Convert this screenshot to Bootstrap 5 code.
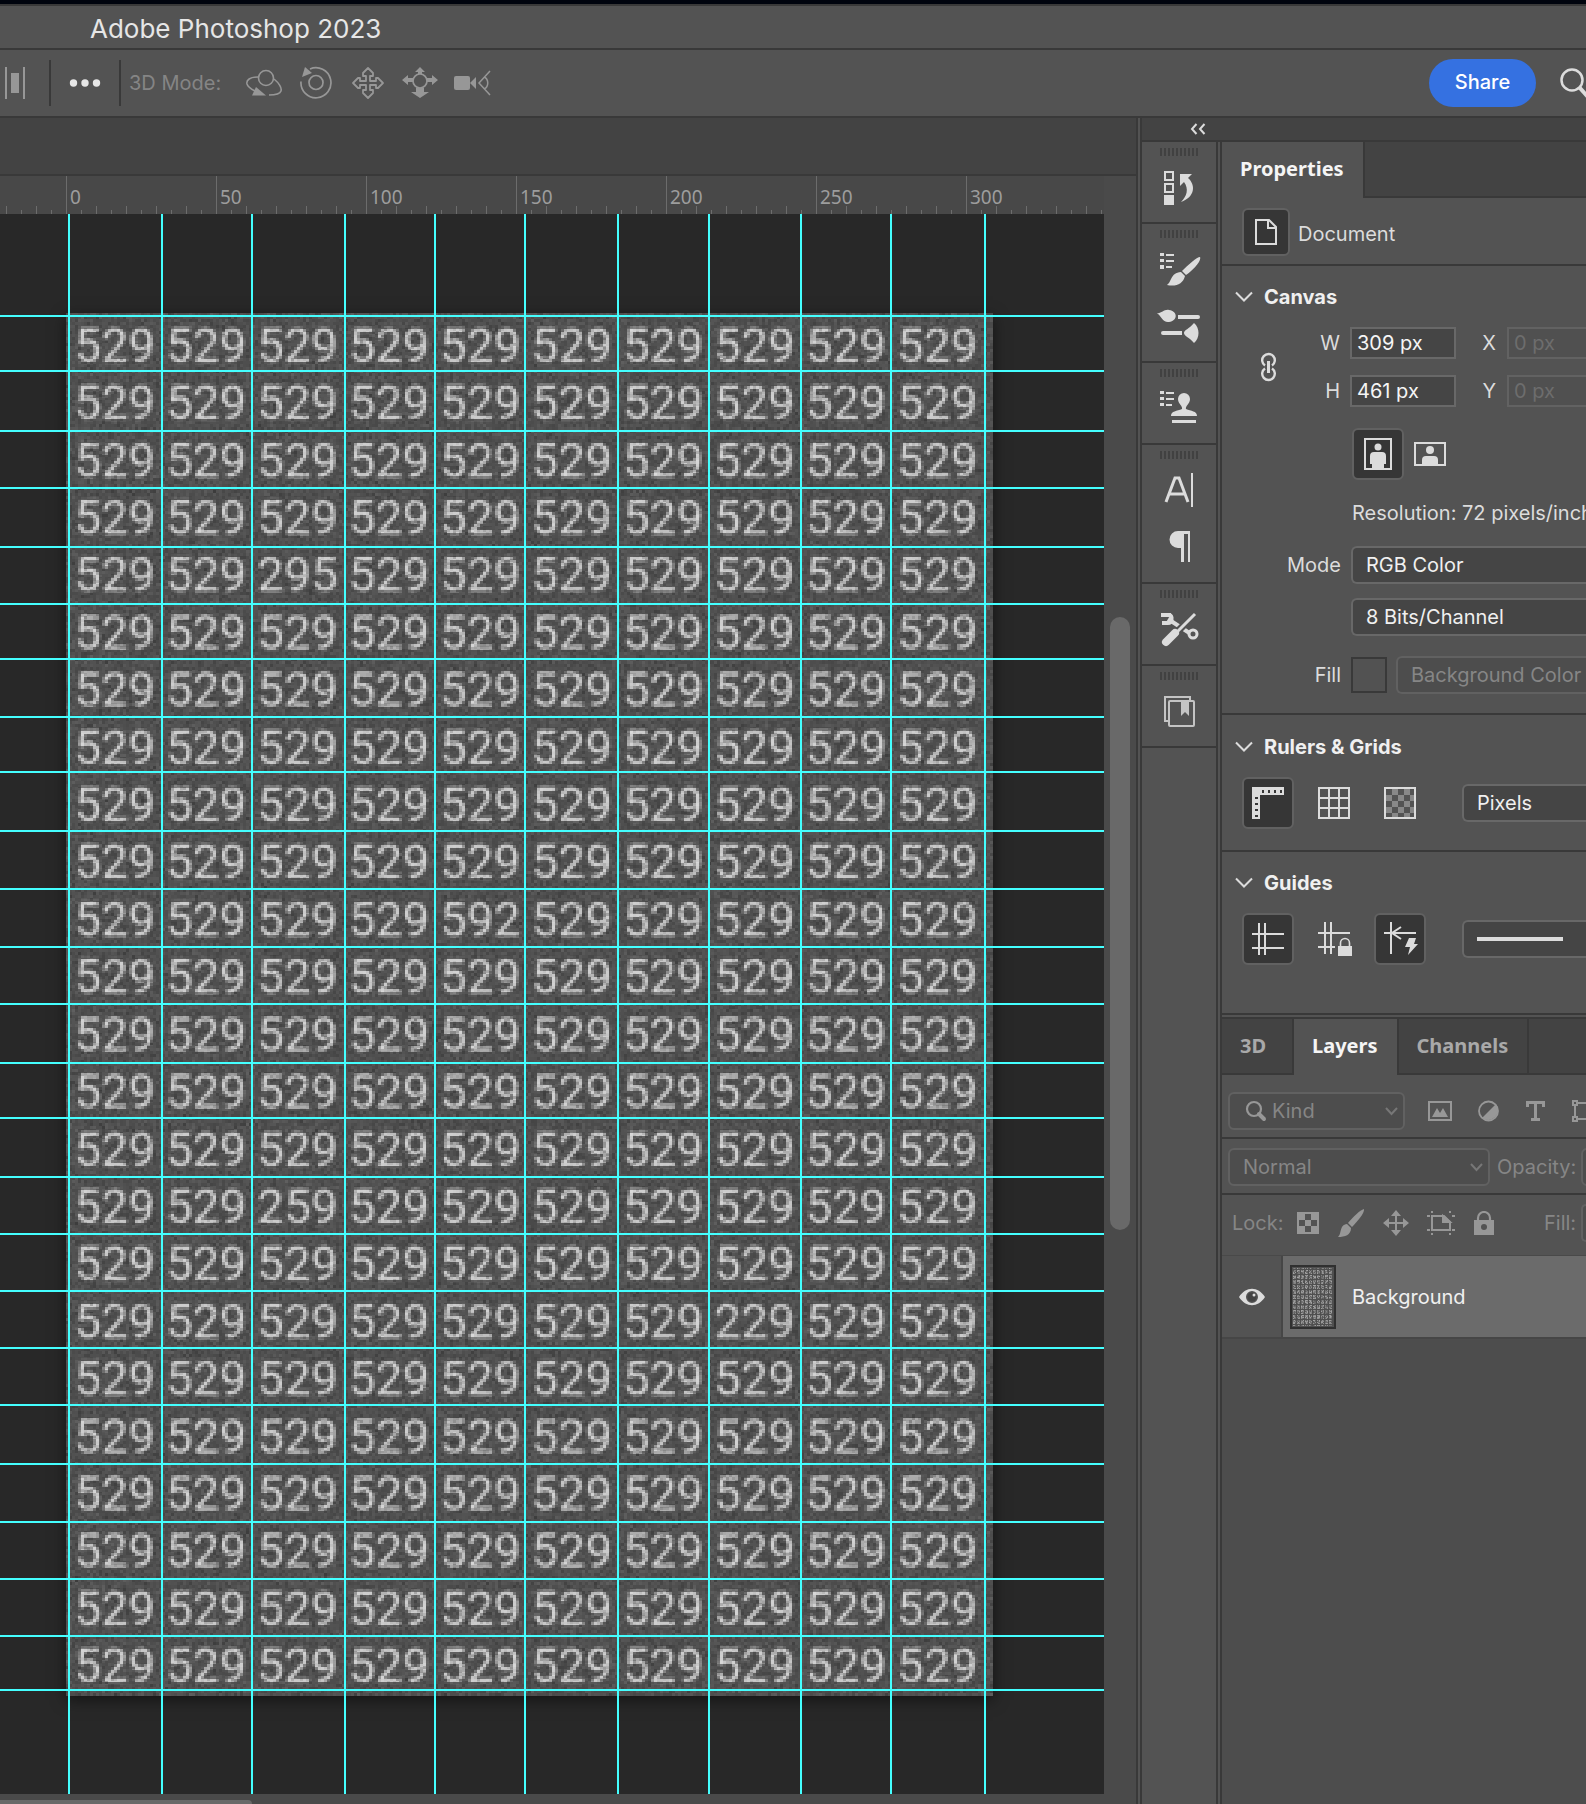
<!DOCTYPE html>
<html lang="en">
<head>
<meta charset="utf-8">
<meta name="viewport" content="width=device-width, initial-scale=1">
<title>Adobe Photoshop 2023</title>
<link href="https://cdn.jsdelivr.net/npm/bootstrap@5.3.0/dist/css/bootstrap.min.css" rel="stylesheet">
<style>
  :root { --face: #535353; --well: #434343; --line: #393939; --edge: #686868; --ink: #dcdcdc; --dim: #979797; }
  body { background: var(--face); color: var(--ink); font: 400 20px/24px Inter, "Noto Sans", sans-serif; }
  svg { display: block; flex: none; }
  .app-shell { height: 100vh; min-height: 1400px; overflow: hidden; }
  .desk-strip { height: 6px; background: #00040e; border-bottom: 2px solid var(--line); }
  .title-strip { height: 44px; padding: 3px 0 0 90px; border-bottom: 2px solid var(--line); font-size: 26px; color: #e6e6e6; }
  .options-bar { height: 68px; border-bottom: 2px solid var(--line); color: var(--dim); }
  .rule-v { width: 2px; height: 46px; background: var(--line); }
  .after-align { margin: 0 18px 0 23px; }
  .after-more { margin: 0 8px 0 18px; }
  .mode-label { color: #858585; }
  .mode-tools { gap: 16px; margin-left: 25px; }
  .plain-btn { background: none; border: 0; padding: 0; color: inherit; }
  .share-btn { --bs-btn-bg: #3571e1; --bs-btn-hover-bg: #2c64cf; --bs-btn-border-color: transparent; --bs-btn-color: #fff; width: 107px; height: 48px; font-size: 20px; font-weight: 500; padding: 0 0 2px; }

  .doc-side { background: #4a4a4a; border-right: 2px solid var(--line); min-width: 0; }
  .doc-tabs { height: 58px; background: var(--well); border-bottom: 2px solid var(--line); }
  .ruler { height: 38px; background-color: #484848; overflow: hidden; font: 19px/24px "Noto Sans", sans-serif; color: #9d9d9d;
    background-image: linear-gradient(90deg, #6c6c6c 1px, transparent 1px), linear-gradient(90deg, #6c6c6c 1px, transparent 1px), linear-gradient(90deg, #6c6c6c 1px, transparent 1px);
    background-size: 150px 38px, 30px 8px, 15px 4px; background-position: 66px 0, 6px 100%, 6px 100%; background-repeat: repeat-x; padding-left: 66px; }
  .ruler span { width: 150px; flex: none; padding: 9px 0 0 4px; }
  .stage { background: #282828; position: relative; overflow: hidden; padding: 99px 0 0 66px; }
  .art { width: 927px; height: 1383px; padding: 4px 10px 1px 3px; background: #505050; position: relative; box-shadow: 0 4px 14px rgba(0,0,0,.5); }
  .num-grid { height: 100%; display: grid; grid-template: repeat(24, 1fr) / repeat(10, 1fr); place-items: center; font: 400 48px/56px Roboto, sans-serif; color: #d8d8d8; filter: url(#mosaic); }
  .grain { position: absolute; inset: 0; width: 100%; height: 100%; image-rendering: pixelated; }
  .guide-v, .guide-h { position: absolute; background: #44ffff; }
  .guide-v { top: 0; bottom: 0; width: 2px; }
  .guide-h { left: 0; right: 0; height: 2px; }
  .scroll-v { width: 32px; padding: 403px 6px 0; margin-top: 38px; }
  .scroll-v div { height: 613px; border-radius: 10px; background: #696969; }
  .scroll-h { height: 10px; padding-top: 6px; }
  .scroll-h div { height: 4px; width: 252px; border-radius: 0 8px 0 0; background: #696969; }

  .dock { width: 446px; border-left: 2px solid var(--line); margin-left: 2px; flex: none; }
  .dock-head { height: 24px; background: var(--well); border-bottom: 2px solid var(--line); padding-left: 48px; }
  .icon-rail { width: 76px; border-right: 2px solid var(--line); flex: none; }
  .rail-group { border-bottom: 2px solid var(--line); padding: 6px 0 15px; display: flex; flex-direction: column; align-items: center; }
  .grip { width: 38px; height: 8px; margin-bottom: 12px; background: repeating-linear-gradient(90deg, #414141 0 2px, transparent 2px 4px); }
  .rail-group button { margin-bottom: 1px; }
  .rail-group button + button { margin-top: 18px; }
  .panels { border-left: 2px solid var(--line); margin-left: 2px; min-width: 0; background: var(--face); }

  .tab-strip { height: 56px; background: var(--well); flex-wrap: nowrap; }
  .tab-strip .nav-link { border: 0; border-radius: 0; border-right: 2px solid var(--line); border-bottom: 2px solid var(--line); padding: 0 19px 0 18px; min-width: 72px; height: 56px; font: 700 20px/52px "Noto Sans", sans-serif; color: #a9a9a9; text-align: left; margin: 0; }
  .tab-strip .nav-link.active { background: var(--face); color: #f5f5f5; border-color: var(--line); border-bottom: 0; padding-bottom: 2px; }
  .tab-rest { flex: 1; border-bottom: 2px solid var(--line); }
  .tool-btn { width: 52px; height: 52px; border: 2px solid transparent; border-radius: 6px; background: none; color: var(--ink); display: grid; place-items: center; padding: 0; flex: none; }
  .tool-btn.on { background: #363636; border-color: #616161; }
  .tool-btn.doc { width: 48px; height: 48px; }
  .sect { border-bottom: 2px solid var(--line); }
  .sect-head { height: 24px; gap: 11px; padding-left: 13px; font-weight: 700; font-size: 20px; line-height: 24px; color: #f0f0f0; margin: 0; }
  .field-label { width: 119px; text-align: right; margin-right: 10px; flex: none; }
  .short-label { width: 63px; }
  .xy-label { width: 40px; text-align: right; margin-right: 11px; }
  .num-box { width: 106px; height: 32px; border: 2px solid var(--edge); border-radius: 0; background: #454545; color: #f5f5f5; padding: 0 5px; font: inherit; flex: none; }
  .num-box:disabled { background: #505050; border-color: #626262; color: #6d6d6d; }
  .pick { height: 38px; border: 2px solid var(--edge); border-radius: 6px; background: #454545; color: #f0f0f0; padding: 0 13px; font: inherit; box-shadow: none; }
  .pick:disabled { background: #4d4d4d; border-color: #616161; color: #868686; opacity: 1; }
  .to-edge { border-right: 0; border-top-right-radius: 0; border-bottom-right-radius: 0; padding-right: 0; }
  .after-tools { margin-left: 22px; }
  .swatch { width: 36px; height: 36px; border: 2px solid var(--line); background: #525252; margin-right: 9px; flex: none; padding: 0; }
  .dimmed { color: #868686; }
  .layers { color: var(--dim); margin-top: 2px; border-top: 2px solid var(--line); }
  .layer-list { background: #4d4d4d; }
  .layer-row { height: 84px; border-top: 1px solid #494949; border-bottom: 2px solid #464646; background: #6b6b6b; color: #f0f0f0; }
  .eye-cell { width: 61px; border-right: 2px solid #464646; background: var(--face); }
  .kind-box { position: relative; width: 177px; flex: none; }
  .kind-box .pick { padding-left: 42px; }
  .over-l { position: absolute; left: 17px; top: 8px; }
  .over-r { position: absolute; right: 7px; top: 15px; }
</style>
</head>
<body>
<svg width="0" height="0" class="position-absolute" aria-hidden="true">
  <filter id="mosaic" x="0" y="0" width="100%" height="100%" color-interpolation-filters="sRGB">
    <feGaussianBlur in="SourceGraphic" stdDeviation="0.8" result="soft"/>
    <feFlood x="1" y="1" width="1" height="1" flood-color="#000"/>
    <feComposite width="3" height="3" x="0" y="0"/>
    <feTile result="dots"/>
    <feComposite in="soft" in2="dots" operator="in"/>
    <feMorphology operator="dilate" radius="1"/>
  </filter>
</svg>

<div class="app-shell d-flex flex-column">
  <div class="desk-strip flex-shrink-0"></div>
  <header class="title-strip d-flex align-items-center flex-shrink-0">Adobe Photoshop 2023</header>

  <div class="options-bar d-flex align-items-center flex-shrink-0">
    <button class="plain-btn ms-1" aria-label="Distribute"><svg width="22" height="34" viewBox="0 0 22 34"><path fill="currentColor" d="M1 1h2v32H1zM19 1h2v32h-2zM7 7h8v20H7z"/></svg></button>
    <div class="rule-v after-align"></div>
    <button class="plain-btn" aria-label="More options"><svg width="32" height="10" viewBox="0 0 32 10" fill="#e6e6e6"><circle cx="4.500" cy="5" r="3.700"/><circle cx="16" cy="5" r="3.700"/><circle cx="27.500" cy="5" r="3.700"/></svg></button>
    <div class="rule-v after-more"></div>
    <span class="mode-label">3D Mode:</span>
    <div class="mode-tools d-flex">
      <button class="plain-btn" aria-label="Orbit"><svg width="36" height="34" viewBox="0 0 36 34" fill="none" stroke="currentColor" stroke-width="1.600"><circle cx="20" cy="12" r="7.500"/><path d="M12 11C4 11 0 14 1 18c1 3 4 5 8 7M28 13c5 4 8 9 7 12-1 3-6 4-12 4"/><path fill="currentColor" stroke="none" d="M10 21l10 8.500H6z"/></svg></button>
      <button class="plain-btn" aria-label="Roll"><svg width="36" height="34" viewBox="0 0 36 34" fill="none" stroke="currentColor" stroke-width="1.700"><circle cx="18" cy="16.500" r="7"/><path d="M3 15.500A15 15 0 1 0 12 3"/><path fill="currentColor" stroke="none" d="M7 1l7 6-10 4z"/></svg></button>
      <button class="plain-btn" aria-label="Pan"><svg width="36" height="34" viewBox="0 0 36 34" fill="none" stroke="currentColor" stroke-width="1.800" stroke-linejoin="round"><path d="M18 2l5 5v3h-3v5h6v-3h2l5 5-5 5h-2v-3h-6v5h3v3l-5 5-5-5v-3h3v-5h-6v3H8l-5-5 5-5h2v3h6v-5h-3V7z"/></svg></button>
      <button class="plain-btn" aria-label="Slide"><svg width="36" height="34" viewBox="0 0 36 34"><circle cx="18" cy="15" r="7" fill="none" stroke="currentColor" stroke-width="1.700"/><path fill="currentColor" d="M18 1l5 5h-3v2h-4V6h-3zM0 14l6-5v3h5v4H6v3zM36 14l-6-5v3h-5v4h5v3zM14 22h8v4h5l-9 6-9-6h5z"/></svg></button>
      <button class="plain-btn" aria-label="Zoom camera"><svg width="38" height="34" viewBox="0 0 38 34"><rect x="0" y="10" width="16" height="14" rx="2" fill="currentColor"/><path fill="currentColor" d="M16 17l6-6v12z"/><path d="M36 5L25 17l11 12M30 11c5 2 5 10 0 12" fill="none" stroke="currentColor" stroke-width="1.500"/></svg></button>
    </div>
    <button class="btn share-btn rounded-pill ms-auto">Share</button>
    <button class="plain-btn ms-4 overflow-hidden" aria-label="Search"><svg width="26" height="32" viewBox="0 0 26 32" fill="none" stroke="#dcdcdc"><circle cx="12" cy="13" r="10.500" stroke-width="2.500"/><path d="M19.500 20.500L28 30" stroke-width="4"/></svg></button>
  </div>

  <div class="d-flex flex-grow-1 overflow-hidden">
    <main class="doc-side d-flex flex-column flex-grow-1">
      <div class="doc-tabs flex-shrink-0"></div>
      <div class="d-flex flex-grow-1 overflow-hidden">
        <div class="d-flex flex-column flex-grow-1 overflow-hidden">
          <div class="ruler d-flex flex-shrink-0"><span>0</span><span>50</span><span>100</span><span>150</span><span>200</span><span>250</span><span>300</span></div>
          <div class="stage flex-grow-1" id="stage">
            <div class="art"><div class="num-grid" id="numbers"></div><canvas class="grain" id="grain" width="309" height="461"></canvas></div>
          </div>
        </div>
        <div class="scroll-v flex-shrink-0"><div></div></div>
      </div>
      <div class="scroll-h flex-shrink-0"><div></div></div>
    </main>

    <aside class="dock d-flex flex-column">
      <div class="dock-head d-flex align-items-center flex-shrink-0"><button class="plain-btn" aria-label="Expand panels"><svg width="16" height="12" viewBox="0 0 16 12" fill="none" stroke="#dcdcdc" stroke-width="2"><path d="M6.500 1L2 6l4.500 5M14.500 1L10 6l4.500 5"/></svg></button></div>
      <div class="d-flex flex-grow-1 overflow-hidden">
        <nav class="icon-rail" aria-label="Collapsed panels">
          <div class="rail-group"><div class="grip"></div>
            <button class="plain-btn" aria-label="History"><svg width="44" height="38" viewBox="0 0 44 38"><path fill="none" stroke="#dcdcdc" stroke-width="2" d="M8 4h8v8H8zM8 16h8v8H8z"/><path fill="#dcdcdc" d="M7 27h10v10H7zM23 6h12l-4 4c8 7 7 19-7 24 6-6 8-13 3-20l-4 4z"/></svg></button></div>
          <div class="rail-group"><div class="grip"></div>
            <button class="plain-btn" aria-label="Brush settings"><svg width="44" height="38" viewBox="0 1 44 38" fill="#dcdcdc"><path d="M3 4h4v3H3zM3 10h4v3H3zM3 16h4v4H3zM9 5h8v2H9zM9 11h8v2H9zM9 17h6v2H9zM43 8c2 4-8 14-14 18l-4-4C31 16 40 8 43 8zM24 23l4 4c-2 8-9 11-18 9 5-3 3-12 14-13z"/></svg></button>
            <button class="plain-btn" aria-label="Brushes"><svg width="44" height="38" viewBox="0 2 44 38" fill="#dcdcdc"><path d="M0 8c4 1 7-4 12-3 9 1 9 11 0 12C6 18 4 11 0 8zM21 10h20a2 2 0 0 1 0 4H21zM6 26h19v4H6a2 2 0 0 1 0-4zM27 28c0-3 5-4 10-10 6 5 6 15 0 20-5-6-10-7-10-10z"/></svg></button></div>
          <div class="rail-group"><div class="grip"></div>
            <button class="plain-btn" aria-label="Clone source"><svg width="44" height="38" viewBox="0 0 44 38" fill="#dcdcdc"><path d="M3 2h4v3H3zM3 8h4v3H3zM3 14h4v3H3zM9 3h8v2H9zM9 9h8v2H9zM9 15h6v2H9zM14 27c0-5 6-5 11-7 1-3-4-5-4-10a6 6 0 0 1 12 0c0 5-5 7-4 10 5 2 11 2 11 7zM15 31h24v3H15z"/></svg></button></div>
          <div class="rail-group"><div class="grip"></div>
            <button class="plain-btn" aria-label="Character"><svg width="44" height="38" viewBox="0 2 44 38"><path d="M9 33L18 9h4l9 24M12 25h16" fill="none" stroke="#dcdcdc" stroke-width="3"/><path fill="#dcdcdc" d="M34 4h2v34h-2z"/></svg></button>
            <button class="plain-btn" aria-label="Paragraph"><svg width="44" height="38" viewBox="0 2 44 38"><path fill="#dcdcdc" d="M21 5h12v31h-2V8h-4v28h-3V22h-3a8.500 8.500 0 0 1 0-17z"/></svg></button></div>
          <div class="rail-group"><div class="grip"></div>
            <button class="plain-btn" aria-label="Tool presets"><svg width="44" height="38" viewBox="0 0 44 38"><path d="M11 9l26 17" stroke="#dcdcdc" stroke-width="4"/><path d="M4 5h10M12 5c4 1 3 8-1 8H5" stroke="#dcdcdc" stroke-width="4" fill="none"/><circle cx="36" cy="24" r="4" fill="#535353" stroke="#dcdcdc" stroke-width="3"/><path d="M34 8L20 22" stroke="#535353" stroke-width="7"/><path d="M38 4L18 24" stroke="#dcdcdc" stroke-width="3"/><path d="M18 23L9 32" stroke="#dcdcdc" stroke-width="8" stroke-linecap="round"/></svg></button></div>
          <div class="rail-group"><div class="grip"></div>
            <button class="plain-btn" aria-label="Libraries"><svg width="44" height="38" viewBox="0 0 44 38" fill="none" stroke="#c4c4c4" stroke-width="2"><path d="M11 29H8V5h25v3"/><rect x="12" y="9" width="25" height="25" rx="1"/><path fill="#c4c4c4" stroke="none" d="M24 9h8v15l-4-4-4 4z"/></svg></button></div>
        </nav>

        <div class="panels flex-grow-1 d-flex flex-column overflow-hidden">
          <div class="nav nav-tabs tab-strip border-0 flex-shrink-0"><button class="nav-link active">Properties</button><div class="tab-rest"></div></div>

          <div class="sect d-flex align-items-center" style="gap:8px;padding:10px 0 8px 20px">
            <button class="tool-btn doc on" aria-label="Document"><svg width="24" height="28" viewBox="0 0 24 28" fill="none" stroke="#dcdcdc" stroke-width="2"><path d="M2 2h13l7 7v17H2zM14 2v8h8"/></svg></button><span class="pt-1">Document</span>
          </div>

          <section class="sect" style="padding:19px 0">
            <h2 class="sect-head d-flex align-items-center"><svg width="18" height="12" viewBox="0 0 18 12" fill="none" stroke="#dcdcdc" stroke-width="2"><path d="M1 1.500l8 8 8-8"/></svg>Canvas</h2>
            <div class="d-flex align-items-center" style="padding:18px 0 0 38px">
              <svg width="17" height="30" viewBox="0 0 17 30" fill="none" stroke="#dcdcdc" stroke-width="2.400"><path d="M5 13.500a6.300 6.300 0 1 1 7 0M5 16.500a6.300 6.300 0 1 0 7 0"/><path d="M8.500 9v12" stroke-width="3"/></svg>
              <div class="d-flex flex-column gap-3 ps-0">
                <div class="d-flex align-items-center"><label class="field-label short-label" for="w">W</label><input class="num-box" id="w" value="309 px"><label class="xy-label" for="x">X</label><input class="num-box" id="x" value="0 px" disabled></div>
                <div class="d-flex align-items-center"><label class="field-label short-label" for="h">H</label><input class="num-box" id="h" value="461 px"><label class="xy-label" for="y">Y</label><input class="num-box" id="y" value="0 px" disabled></div>
              </div>
            </div>
            <div class="d-flex align-items-center" style="padding:21px 0 21px 130px;gap:10px">
              <button class="tool-btn on" aria-label="Portrait"><svg width="28" height="32" viewBox="0 0 28 32" fill="#dcdcdc"><path fill="none" stroke="#dcdcdc" stroke-width="2" d="M1 1h26v30H1z"/><circle cx="14" cy="9" r="3.500"/><path d="M6 18q0-4 4-4h8q4 0 4 4v8h-2v5H8v-5H6z"/></svg></button>
              <button class="plain-btn" aria-label="Landscape"><svg width="32" height="24" viewBox="0 0 32 24" fill="#dcdcdc"><path fill="none" stroke="#dcdcdc" stroke-width="2" d="M1 1h30v22H1z"/><circle cx="16" cy="8" r="4"/><path d="M8 23v-5q0-4 4-4h8q4 0 4 4v5z"/></svg></button>
            </div>
            <div class="text-nowrap" style="padding-left:130px">Resolution: 72 pixels/inch</div>
            <div class="d-flex align-items-center" style="margin-top:21px"><label class="field-label" for="mode">Mode</label><select class="form-select pick to-edge" id="mode"><option>RGB Color</option></select></div>
            <div class="d-flex" style="margin-top:14px;padding-left:129px"><select class="form-select pick to-edge" aria-label="Bit depth"><option>8 Bits/Channel</option></select></div>
            <div class="d-flex align-items-center" style="margin-top:20px"><label class="field-label" for="fill">Fill</label><button class="swatch" aria-label="Fill swatch"></button><select class="form-select pick to-edge" id="fill" disabled><option>Background Color</option></select></div>
          </section>

          <section class="sect" style="padding:20px 0">
            <h2 class="sect-head d-flex align-items-center"><svg width="18" height="12" viewBox="0 0 18 12" fill="none" stroke="#dcdcdc" stroke-width="2"><path d="M1 1.500l8 8 8-8"/></svg>Rulers &amp; Grids</h2>
            <div class="d-flex align-items-center" style="gap:14px;padding:18px 0 1px 20px">
              <button class="tool-btn on" aria-label="Rulers"><svg width="32" height="32" viewBox="0 0 32 32"><path fill="#dcdcdc" d="M0 0h32v8H8v24H0z"/><path fill="none" stroke="#363636" stroke-width="3" stroke-dasharray="2 4" d="M10 4.500h20M4.500 10v21"/></svg></button>
              <button class="tool-btn" aria-label="Grid"><svg width="32" height="32" viewBox="0 0 32 32"><path fill="none" stroke="#dcdcdc" stroke-width="2" d="M1 1h30v30H1zM11 1v30M21 1v30M1 11h30M1 21h30"/></svg></button>
              <button class="tool-btn" aria-label="Transparency grid"><svg width="32" height="32" viewBox="0 0 32 32"><path fill="#888" d="M8 2h6v6H8zM20 2h6v6h-6zM2 8h6v6H2zM14 8h6v6h-6zM26 8h5v6h-5zM8 14h6v6H8zM20 14h6v6h-6zM2 20h6v6H2zM14 20h6v6h-6zM26 20h5v6h-5zM8 26h6v5H8zM20 26h6v5h-6z"/><path fill="none" stroke="#dcdcdc" stroke-width="2" d="M1 1h30v30H1z"/></svg></button>
              <select class="form-select pick to-edge after-tools flex-fill w-auto" aria-label="Ruler units"><option>Pixels</option></select>
            </div>
          </section>

          <section class="sect" style="padding:19px 0 48px">
            <h2 class="sect-head d-flex align-items-center"><svg width="18" height="12" viewBox="0 0 18 12" fill="none" stroke="#dcdcdc" stroke-width="2"><path d="M1 1.500l8 8 8-8"/></svg>Guides</h2>
            <div class="d-flex align-items-center" style="gap:14px;padding:18px 0 0 20px">
              <button class="tool-btn on" aria-label="Show guides"><svg width="32" height="32" viewBox="0 0 32 32"><path fill="none" stroke="#dcdcdc" stroke-width="2" d="M0 11h32M0 25h32M7 0v32M13 0v32"/></svg></button>
              <button class="tool-btn" aria-label="Lock guides"><svg width="36" height="34" viewBox="-2 0 36 34"><path fill="none" stroke="#dcdcdc" stroke-width="2" d="M0 11h32M0 25h17M7 0v32M13 0v32"/><path fill="#dcdcdc" d="M20 24h14v10H20z"/><path fill="none" stroke="#dcdcdc" stroke-width="1.600" d="M22.500 24v-3a4.500 4.500 0 0 1 9 0v3"/></svg></button>
              <button class="tool-btn on" aria-label="Smart guides"><svg width="36" height="34" viewBox="-2 0 36 34"><path fill="none" stroke="#dcdcdc" stroke-width="2" d="M0 11h32M7 0v32M17 5l-9 6 9 6"/><path fill="#dcdcdc" d="M25 16h7l-2 6h4L24 33l2-8h-5z"/></svg></button>
              <button class="pick to-edge after-tools flex-fill d-flex align-items-center" aria-label="Guide style"><svg width="86" height="4"><path fill="#dcdcdc" d="M0 0h86v4H0z"/></svg></button>
            </div>
          </section>

          <div class="layers flex-grow-1 d-flex flex-column">
            <div class="nav nav-tabs tab-strip border-0 flex-shrink-0"><button class="nav-link">3D</button><button class="nav-link active">Layers</button><button class="nav-link">Channels</button><div class="tab-rest"></div></div>
            <div class="sect d-flex align-items-center flex-shrink-0" style="height:64px;padding:10px 0 0 6px">
              <div class="kind-box">
                <select class="form-select pick" aria-label="Filter type" disabled><option>Kind</option></select>
                <svg class="over-l" width="22" height="22" viewBox="0 0 22 22" fill="none" stroke="currentColor"><circle cx="9" cy="9" r="7" stroke-width="2.200"/><path d="M14 14l5 5" stroke-width="4" stroke-linecap="round"/></svg>
                <svg class="over-r" width="13" height="9" viewBox="0 0 13 9" fill="none" stroke="#777" stroke-width="2"><path d="M1 1l5.500 6L12 1"/></svg>
              </div>
              <div class="d-flex align-items-center" style="gap:26px;margin-left:23px">
                <button class="plain-btn" aria-label="Pixel layers"><svg width="24" height="20" viewBox="0 0 24 20"><path fill="none" stroke="currentColor" stroke-width="2" d="M1 1h22v18H1z"/><path fill="currentColor" d="M4 16l5-9 3 5 3-5 5 9z"/></svg></button>
                <button class="plain-btn" aria-label="Adjustment layers"><svg width="21" height="22" viewBox="0 0 21 22"><circle cx="10.500" cy="11" r="9.500" fill="none" stroke="currentColor" stroke-width="1.800"/><path fill="currentColor" d="M18 4A10 10 0 0 1 4 18z"/></svg></button>
                <button class="plain-btn" aria-label="Type layers"><svg width="21" height="20" viewBox="0 0 21 20" fill="currentColor"><path d="M1 0h19v6h-3V3h-5v14h3v3H6v-3h3V3H4v3H1z"/></svg></button>
                <button class="plain-btn" aria-label="Shape layers"><svg width="24" height="22" viewBox="0 0 24 22" fill="none" stroke="currentColor" stroke-width="2"><path d="M1 1h4v4H1zM1 17h4v4H1zM3 5v12M5 3h14M5 19h14M19 1h4v4h-4zM19 17h4v4h-4z"/></svg></button>
              </div>
            </div>
            <div class="sect d-flex align-items-center flex-shrink-0" style="height:56px;padding:2px 0 0 6px">
              <div class="position-relative" style="width:262px;flex:none">
                <select class="form-select pick" aria-label="Blend mode" disabled><option>Normal</option></select>
                <svg class="over-r" width="13" height="9" viewBox="0 0 13 9" fill="none" stroke="#777" stroke-width="2"><path d="M1 1l5.500 6L12 1"/></svg>
              </div>
              <label class="dimmed text-nowrap flex-shrink-0" for="op" style="width:84px;margin-left:7px">Opacity:</label><input class="pick" id="op" value="100%" disabled>
            </div>
            <div class="d-flex align-items-center flex-shrink-0" style="height:60px;padding:0 0 4px 10px">
              <span class="dimmed">Lock:</span>
              <div class="d-flex align-items-center" style="gap:18px;margin-left:14px">
                <button class="plain-btn" aria-label="Lock transparency"><svg width="22" height="22" viewBox="0 0 22 22"><path fill="none" stroke="currentColor" stroke-width="2" d="M1 1h20v20H1z"/><path fill="currentColor" d="M2 2h6v6H2zM14 2h6v6h-6zM8 8h6v6H8zM2 14h6v6H2zM14 14h6v6h-6z"/></svg></button>
                <button class="plain-btn" aria-label="Lock pixels"><svg width="28" height="28" viewBox="0 0 28 28" fill="currentColor"><path d="M27 0c1 4-8 14-12 18l-4-4C16 8 23 1 27 0zM10 15l4 4c0 7-6 9-13 9 4-3 1-12 9-13z"/></svg></button>
                <button class="plain-btn" aria-label="Lock position"><svg width="26" height="26" viewBox="0 0 26 26" fill="currentColor"><path d="M13 0l5 6h-4v6h6V8l6 5-6 5v-4h-6v6h4l-5 6-5-6h4v-6H6v4l-6-5 6-5v4h6V6H8z"/></svg></button>
                <button class="plain-btn" aria-label="Lock artboard"><svg width="28" height="24" viewBox="0 0 28 24" fill="none" stroke="currentColor" stroke-width="2"><path d="M5 5h12l6 6v8H5zM0 5h3M0 19h3M25 19h3M25 5h3M5 0v2M23 0v2M5 22v2M23 22v2"/><path fill="currentColor" d="M16 5l7 6h-7z"/></svg></button>
                <button class="plain-btn" aria-label="Lock all"><svg width="22" height="24" viewBox="0 0 22 24"><path fill="currentColor" fill-rule="evenodd" d="M1 9h20v15H1zM11 13a3 3 0 1 0 0 6 3 3 0 0 0 0-6z"/><path fill="none" stroke="currentColor" stroke-width="2.200" d="M5 10V7a6 6 0 0 1 12 0v3"/></svg></button>
              </div>
              <label class="dimmed ms-auto flex-shrink-0" for="fo" style="width:37px">Fill:</label><input class="pick to-edge" id="fo" value="" disabled style="width:5px;padding:0">
            </div>
            <div class="layer-list flex-grow-1">
              <div class="layer-row d-flex align-items-center">
                <button class="plain-btn eye-cell h-100 d-grid justify-content-center align-items-center" aria-label="Toggle visibility"><svg width="26" height="18" viewBox="0 0 26 18"><path fill="#dcdcdc" fill-rule="evenodd" d="M0 9C7-2 19-2 26 9 19 20 7 20 0 9zM13 3a6 6 0 1 0 0 12 6 6 0 0 0 0-12z"/><circle cx="13" cy="9" r="4.500" fill="#434343"/><circle cx="15" cy="7" r="1.500" fill="#dcdcdc"/></svg></button>
                <canvas id="thumb" width="42" height="60" style="border:2px solid #303030;margin:0 16px 0 7px"></canvas>
                Background
              </div>
            </div>
          </div>
        </div>
      </div>
    </aside>
  </div>
</div>

<script src="https://cdn.jsdelivr.net/npm/bootstrap@5.3.0/dist/js/bootstrap.bundle.min.js"></script>
<script>
  // Numbers printed on the artwork: 24 rows of 10, a few of them swapped.
  const odd = { '4,2': '295', '10,4': '592', '15,2': '259', '17,7': '229' };
  const grid = document.getElementById('numbers');
  for (let r = 0; r < 24; r++) for (let c = 0; c < 10; c++) {
    const cell = document.createElement('span');
    cell.textContent = odd[r + ',' + c] || '529';
    grid.append(cell);
  }
  // Guides, as distances from the stage's left and top edges.
  const stage = document.getElementById('stage');
  const addGuide = (kind, side, at) => {
    const g = document.createElement('div');
    g.className = kind;
    g.style[side] = at + 'px';
    stage.append(g);
  };
  [68, 161, 251, 344, 434, 524, 617, 708, 800, 890, 984].forEach(x => addGuide('guide-v', 'left', x));
  [101, 156, 216, 273, 332, 389, 444, 502, 557, 616, 674, 732, 789, 848, 903, 962, 1019, 1076, 1133, 1190, 1249, 1307, 1364, 1421, 1475].forEach(y => addGuide('guide-h', 'top', y));

  let seed = 7;
  const rnd = () => (seed = (seed * 16807) % 2147483647) / 2147483647;
  const g = document.getElementById('grain').getContext('2d');
  const px = g.createImageData(309, 461);
  for (let i = 0; i < px.data.length; i += 4) {
    const n = rnd() + rnd() + rnd() - 1.5;
    const v = n > 0 ? 255 : 0;
    px.data[i] = px.data[i + 1] = px.data[i + 2] = v;
    px.data[i + 3] = Math.abs(n) * (v ? 18 : 44);
  }
  g.putImageData(px, 0, 0);

  const t = document.getElementById('thumb').getContext('2d');
  t.fillStyle = '#4f4f4f';
  t.fillRect(0, 0, 42, 60);
  for (let y = 1; y < 59; y++) for (let x = 1; x < 41; x++) {
    if (x % 4 === 0 || y % 5 === 2) continue;
    const v = 85 + Math.round(rnd() * 80);
    t.fillStyle = `rgb(${v},${v},${v})`;
    t.fillRect(x, y, 1, 1);
  }
</script>
</body>
</html>
